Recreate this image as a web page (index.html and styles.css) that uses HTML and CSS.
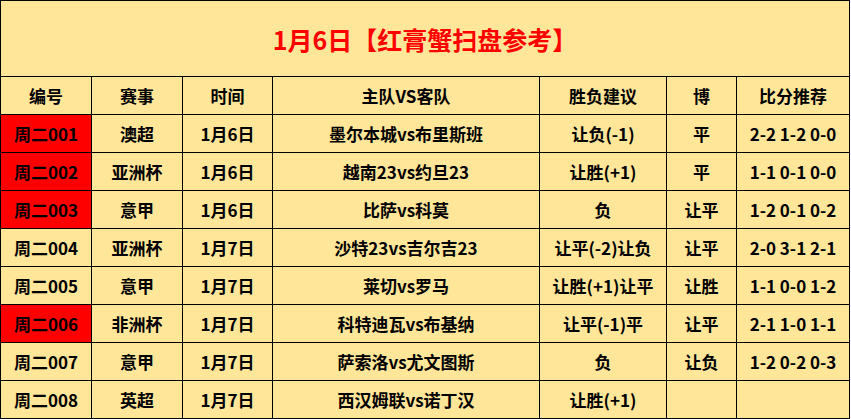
FILE: index.html
```html
<!DOCTYPE html>
<html lang="zh">
<head>
<meta charset="utf-8">
<link rel="stylesheet" href="styles.css">
</head>
<body>
<table class="sheet">
  <colgroup>
    <col class="c-id"><col class="c-lg"><col class="c-time"><col class="c-team"><col class="c-tip"><col class="c-bo"><col class="c-score">
  </colgroup>
  <tr class="title-row"><td colspan="7" class="title">1月6日【红膏蟹扫盘参考】</td></tr>
  <tr class="row"><td>编号</td><td>赛事</td><td>时间</td><td>主队VS客队</td><td>胜负建议</td><td>博</td><td>比分推荐</td></tr>
  <tr class="row"><td class="hot">周二001</td><td>澳超</td><td>1月6日</td><td>墨尔本城vs布里斯班</td><td>让负(-1)</td><td>平</td><td>2-2 1-2 0-0</td></tr>
  <tr class="row"><td class="hot">周二002</td><td>亚洲杯</td><td>1月6日</td><td>越南23vs约旦23</td><td>让胜(+1)</td><td>平</td><td>1-1 0-1 0-0</td></tr>
  <tr class="row"><td class="hot">周二003</td><td>意甲</td><td>1月6日</td><td>比萨vs科莫</td><td>负</td><td>让平</td><td>1-2 0-1 0-2</td></tr>
  <tr class="row"><td>周二004</td><td>亚洲杯</td><td>1月7日</td><td>沙特23vs吉尔吉23</td><td>让平(-2)让负</td><td>让平</td><td>2-0 3-1 2-1</td></tr>
  <tr class="row"><td>周二005</td><td>意甲</td><td>1月7日</td><td>莱切vs罗马</td><td>让胜(+1)让平</td><td>让胜</td><td>1-1 0-0 1-2</td></tr>
  <tr class="row"><td class="hot">周二006</td><td>非洲杯</td><td>1月7日</td><td>科特迪瓦vs布基纳</td><td>让平(-1)平</td><td>让平</td><td>2-1 1-0 1-1</td></tr>
  <tr class="row"><td>周二007</td><td>意甲</td><td>1月7日</td><td>萨索洛vs尤文图斯</td><td>负</td><td>让负</td><td>1-2 0-2 0-3</td></tr>
  <tr class="row"><td>周二008</td><td>英超</td><td>1月7日</td><td>西汉姆联vs诺丁汉</td><td>让胜(+1)</td><td></td><td></td></tr>
</table>
</body>
</html>
```
FILE: styles.css
```css
html, body {
  margin: 0;
  padding: 0;
  background: #ffffff;
}
.sheet {
  border-collapse: collapse;
  table-layout: fixed;
  width: 850px;
  background: #ffe699;
  font-family: "Noto Sans CJK SC", "Noto Sans", sans-serif;
  font-weight: bold;
  font-size: 17px;
  color: #000000;
}
.sheet td {
  border: 1px solid #000000;
  text-align: center;
  vertical-align: middle;
  padding: 0;
  white-space: nowrap;
  overflow: hidden;
}
.c-id { width: 91px; }
.c-lg { width: 91px; }
.c-time { width: 90px; }
.c-team { width: 267px; }
.c-tip { width: 127px; }
.c-bo { width: 70px; }
.c-score { width: 113px; }
.title-row { height: 76px; }
.title {
  color: #ff0000;
  font-size: 25px;
  padding-bottom: 4px;
}
.row { height: 38px; }
.hot { background: #ff0000; }
```
